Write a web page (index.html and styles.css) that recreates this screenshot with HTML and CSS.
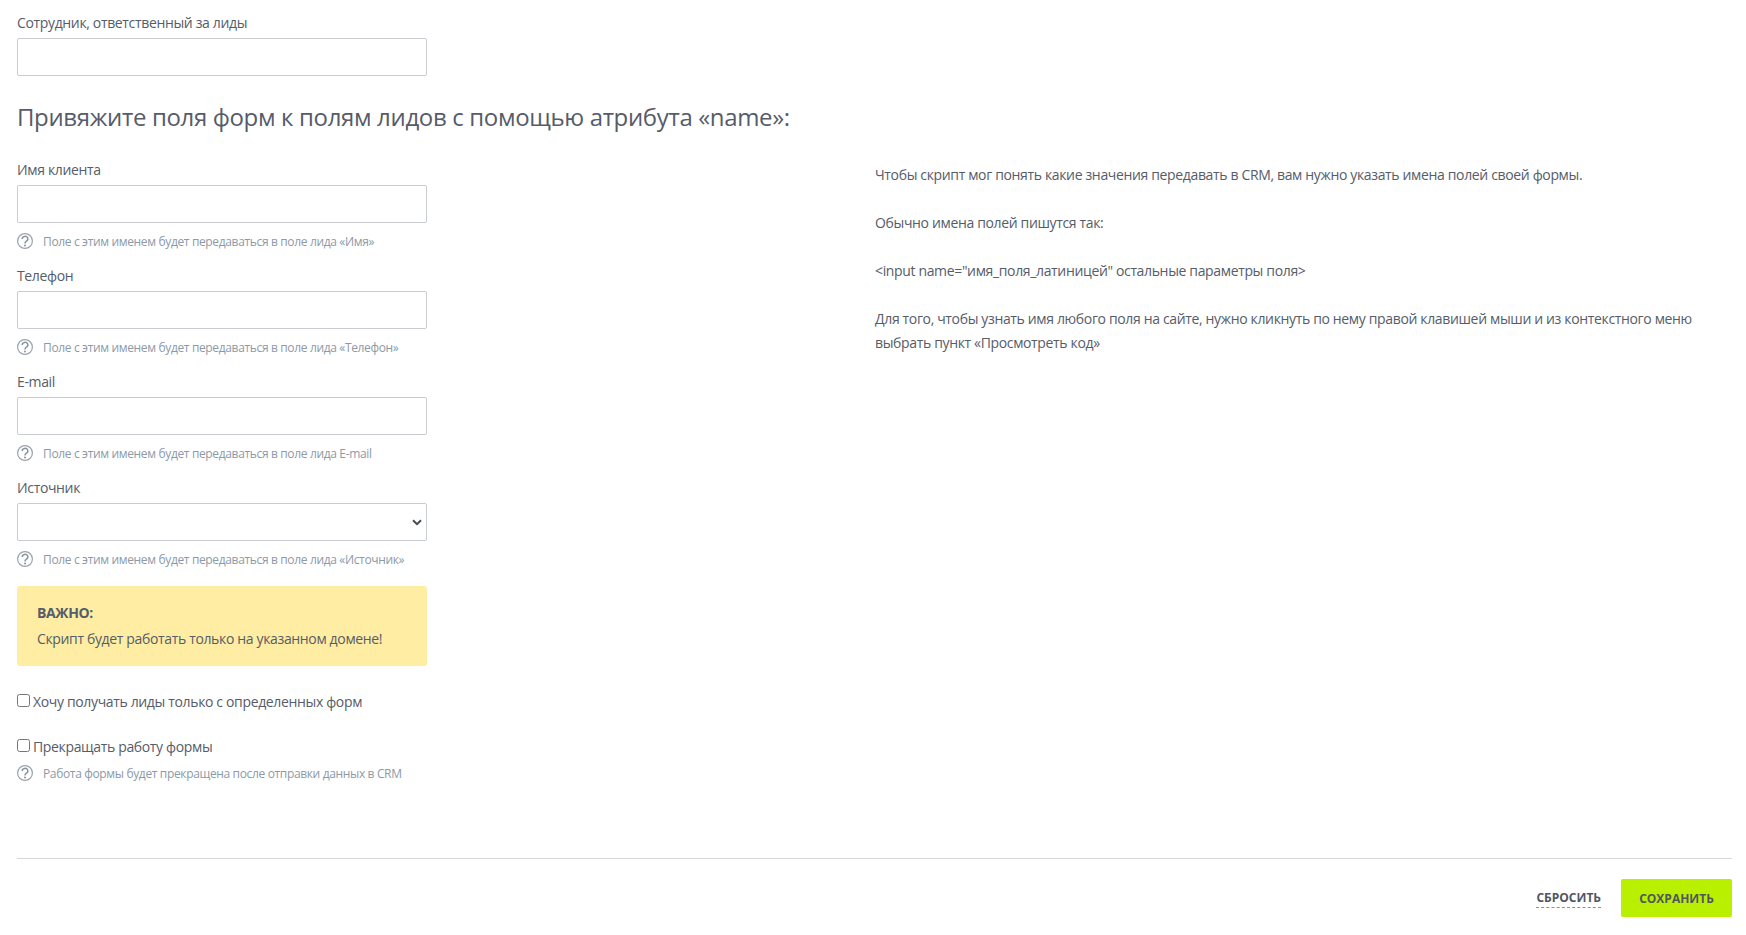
FILE: index.html
```html
<!DOCTYPE html>
<html lang="ru">
<head>
<meta charset="utf-8">
<title>Настройка скрипта</title>
<link rel="stylesheet" href="styles.css">
</head>
<body>
<main class="page">
  <div class="owner">
    <label class="label">Сотрудник, ответственный за лиды</label>
    <input class="control" type="text">
  </div>
  <h2 class="title">Привяжите поля форм к полям лидов с помощью атрибута «name»:</h2>
  <div class="columns">
    <form class="fields">
      <div class="field">
        <label class="label">Имя клиента</label>
        <input class="control" type="text">
        <p class="hint"><svg class="q" viewBox="0 0 16 16"><circle cx="8" cy="8" r="7.4"/><path d="M5.2 6a2.8 2.6 0 1 1 4.2 2.2c-1 .6-1.4 1-1.4 2.2"/><circle class="dot" cx="8" cy="12.4" r="1"/></svg><span>Поле с этим именем будет передаваться в поле лида «Имя»</span></p>
      </div>
      <div class="field">
        <label class="label">Телефон</label>
        <input class="control" type="text">
        <p class="hint"><svg class="q" viewBox="0 0 16 16"><circle cx="8" cy="8" r="7.4"/><path d="M5.2 6a2.8 2.6 0 1 1 4.2 2.2c-1 .6-1.4 1-1.4 2.2"/><circle class="dot" cx="8" cy="12.4" r="1"/></svg><span>Поле с этим именем будет передаваться в поле лида «Телефон»</span></p>
      </div>
      <div class="field">
        <label class="label">E-mail</label>
        <input class="control" type="text">
        <p class="hint"><svg class="q" viewBox="0 0 16 16"><circle cx="8" cy="8" r="7.4"/><path d="M5.2 6a2.8 2.6 0 1 1 4.2 2.2c-1 .6-1.4 1-1.4 2.2"/><circle class="dot" cx="8" cy="12.4" r="1"/></svg><span>Поле с этим именем будет передаваться в поле лида E-mail</span></p>
      </div>
      <div class="field">
        <label class="label">Источник</label>
        <div class="select">
          <svg class="chev" viewBox="0 0 10 7"><path d="M1 1.2l4 4 4-4"/></svg>
        </div>
        <p class="hint"><svg class="q" viewBox="0 0 16 16"><circle cx="8" cy="8" r="7.4"/><path d="M5.2 6a2.8 2.6 0 1 1 4.2 2.2c-1 .6-1.4 1-1.4 2.2"/><circle class="dot" cx="8" cy="12.4" r="1"/></svg><span>Поле с этим именем будет передаваться в поле лида «Источник»</span></p>
      </div>
      <div class="notice">
        <strong>ВАЖНО:</strong>
        <span>Скрипт будет работать только на указанном домене!</span>
      </div>
      <label class="check first"><span class="box"></span>Хочу получать лиды только с определенных форм</label>
      <label class="check second"><span class="box"></span>Прекращать работу формы</label>
      <p class="hint tight"><svg class="q" viewBox="0 0 16 16"><circle cx="8" cy="8" r="7.4"/><path d="M5.2 6a2.8 2.6 0 1 1 4.2 2.2c-1 .6-1.4 1-1.4 2.2"/><circle class="dot" cx="8" cy="12.4" r="1"/></svg><span>Работа формы будет прекращена после отправки данных в CRM</span></p>
    </form>
    <aside class="help">
      <p>Чтобы скрипт мог понять какие значения передавать в CRM, вам нужно указать имена полей своей формы.</p>
      <p>Обычно имена полей пишутся так:</p>
      <p>&lt;input name="имя_поля_латиницей" остальные параметры поля&gt;</p>
      <p>Для того, чтобы узнать имя любого поля на сайте, нужно кликнуть по нему правой клавишей мыши и из контекстного меню выбрать пункт «Просмотреть код»</p>
    </aside>
  </div>
  <footer class="actions">
    <a class="reset">СБРОСИТЬ</a>
    <button class="save" type="button">СОХРАНИТЬ</button>
  </footer>
</main>
</body>
</html>
```
FILE: styles.css
```css
* { box-sizing: border-box; }
html, body { margin: 0; background: #fff; }
body {
  font-family: "Open Sans", "Noto Sans", sans-serif;
  font-size: 14px;
  letter-spacing: -0.35px;
  color: #565c69;
  overflow: hidden;
}
.page {
  height: 935px;
  padding: 13px 14px 0 17px;
}
.label {
  display: block;
  height: 20px;
  margin-bottom: 5px;
  font-size: 14px;
  line-height: 20px;
}
.control, .select {
  display: block;
  width: 410px;
  height: 38px;
  margin: 0;
  background: #fff;
  border: 1px solid #c9ccd1;
  border-radius: 2px;
}
.select {
  display: flex;
  align-items: center;
  justify-content: flex-end;
  padding-right: 4px;
}
.chev { width: 10px; height: 7px; }
.chev path { fill: none; stroke: #444a55; stroke-width: 2; }
.title {
  margin: 25px 0 27px;
  font-size: 24px;
  font-weight: 400;
  line-height: 32px;
}
.columns {
  display: grid;
  grid-template-columns: 858px 1fr;
}
.field { margin-bottom: 14px; }
.hint {
  display: flex;
  align-items: center;
  gap: 10px;
  height: 20px;
  margin: 9px 0 0;
  font-size: 12px;
  line-height: 20px;
  color: #8c9aa7;
}
.q { flex: none; width: 16px; height: 16px; margin-top: -2px; }
.q circle { fill: none; stroke: #9aa3b0; stroke-width: 1.2; }
.q path { fill: none; stroke: #8a93a0; stroke-width: 1.5; }
.q .dot { fill: #8a93a0; stroke: none; }
.notice {
  display: flex;
  flex-direction: column;
  width: 410px;
  height: 80px;
  margin-top: 16px;
  padding: 14px 20px;
  background: #feeda2;
  border-radius: 3px;
  line-height: 26px;
}
.notice strong { font-weight: 700; }
.check {
  display: flex;
  align-items: center;
  height: 20px;
  line-height: 20px;
}
.check.first { margin-top: 26px; }
.check.second { margin-top: 25px; }
.box {
  flex: none;
  width: 13px;
  height: 13px;
  margin-right: 3px;
  margin-top: -4px;
  background: #fff;
  border: 1px solid #767676;
  border-radius: 2.5px;
}
.hint.tight { margin-top: 7px; }
.help { padding-top: 3px; line-height: 24px; }
.help p { margin: 0 0 24px; }
.actions {
  display: flex;
  justify-content: flex-end;
  align-items: center;
  gap: 20px;
  margin-top: 74px;
  padding-top: 20px;
  border-top: 1px solid #d8d8d8;
}
.reset {
  font-size: 12px;
  font-weight: 700;
  letter-spacing: 0;
  line-height: 18px;
  color: #505663;
  border-bottom: 1px dashed #8a8f98;
}
.save {
  width: 111px;
  height: 38px;
  padding: 0;
  border: 0;
  border-radius: 2px;
  background: #b9f000;
  color: #505663;
  font: 700 12px "Open Sans", sans-serif;
}
```
